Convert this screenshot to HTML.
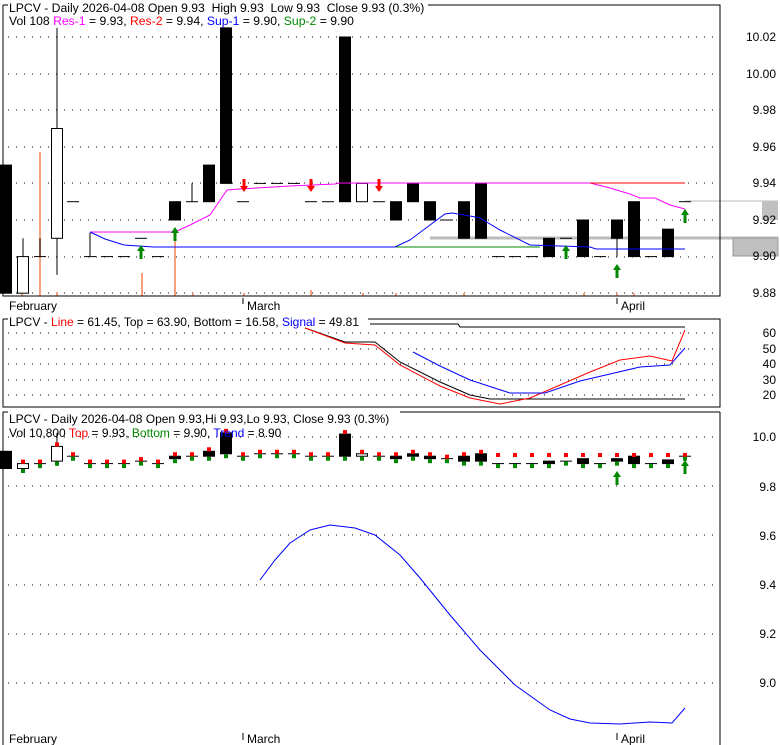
<!DOCTYPE html>
<html><head><meta charset="utf-8"><style>
body{margin:0;background:#fff}
svg{display:block;font-family:"Liberation Sans",Arial,sans-serif}
text{white-space:pre}
</style></head><body>
<svg id="s" width="780" height="745" xmlns="http://www.w3.org/2000/svg">
<rect width="780" height="745" fill="#fff"/>
<g id="g"></g>
<path d="M3,5V296H720V5H428" fill="none" stroke="#000"/>
<path d="M3,5H8" stroke="#000"/>
<text x="9" y="12" font-size="12.2" xml:space="preserve">LPCV - Daily 2026-04-08 Open 9.93  High 9.93  Low 9.93  Close 9.93 (0.3%)</text>
<text x="9" y="25" font-size="12.2">Vol 108 <tspan fill="#f0f">Res-1</tspan> = 9.93, <tspan fill="#f00">Res-2</tspan> = 9.94, <tspan fill="#00f">Sup-1</tspan> = 9.90, <tspan fill="#080">Sup-2</tspan> = 9.90</text>
<g font-size="12" text-anchor="end">
<text x="776" y="41">10.02</text><text x="776" y="78">10.00</text><text x="776" y="114">9.98</text><text x="776" y="151">9.96</text><text x="776" y="187">9.94</text><text x="776" y="224">9.92</text><text x="776" y="260">9.90</text><text x="776" y="297">9.88</text>
</g>
<text x="9" y="310" font-size="12">February</text>
<path d="M243,298V304M617,298V304" stroke="#000"/>
<text x="247" y="310" font-size="12">March</text>
<text x="621" y="310" font-size="12">April</text>
<path d="M3,319V407H720V319H368" fill="none" stroke="#000"/>
<path d="M3,319H8" stroke="#000"/>
<text x="9" y="326" font-size="12">LPCV - <tspan fill="#f00">Line</tspan> = 61.45, Top = 63.90, Bottom = 16.58, <tspan fill="#00f">Signal</tspan> = 49.81</text>
<g font-size="12" text-anchor="end">
<text x="776" y="337">60</text><text x="776" y="353">50</text><text x="776" y="368">40</text><text x="776" y="384">30</text><text x="776" y="399">20</text>
</g>
<polyline fill="none" stroke="#000" points="370,324 458,324 460,327 685,327"/>
<polyline fill="none" stroke="#000" points="305,328 345,342 375,342 400,362 440,382 470,395 490,399 685,399"/>
<polyline fill="none" stroke="#f00" points="305,328 345,343 375,345 400,365 440,386 470,398 500,404 530,398 560,385 590,372 620,360 650,356 672,361 685,330"/>
<polyline fill="none" stroke="#00f" points="413,352 440,366 470,380 510,393 545,393 580,381 610,374 640,367 670,365 685,348"/>
<path d="M3,412V745M3,412H8M720,412V745M400,412H720" fill="none" stroke="#000"/>
<text x="9" y="423" font-size="12">LPCV - Daily 2026-04-08 Open 9.93,Hi 9.93,Lo 9.93, Close 9.93 (0.3%)</text>
<text x="9" y="437" font-size="12">Vol 10,800 <tspan fill="#f00">Top</tspan> = 9.93, <tspan fill="#080">Bottom</tspan> = 9.90, <tspan fill="#00f">Trend</tspan> = 8.90</text>
<g font-size="12" text-anchor="end">
<text x="776" y="441">10.0</text><text x="776" y="491">9.8</text><text x="776" y="540">9.6</text><text x="776" y="589">9.4</text><text x="776" y="638">9.2</text><text x="776" y="687">9.0</text>
</g>
<polyline fill="none" stroke="#00f" points="260,580 275,560 290,543 310,530 330,525 355,528 375,535 400,555 420,578 450,615 480,650 515,685 550,710 570,719 590,723 620,724 650,722 672,723 685,708"/>
<text x="9" y="743" font-size="12">February</text>
<path d="M243,733V740M617,733V740" stroke="#000"/>
<text x="247" y="743" font-size="12">March</text>
<text x="621" y="743" font-size="12">April</text>
</svg>
<script>
var g=document.getElementById('g'),h='';
function P(p){return 37+(10.02-p)/0.02*36.6}
function Q(p){return 439+(10-p)*246}
function G(p){return 437+(10-p)*246}
[10.02,10,9.98,9.96,9.94,9.92,9.90,9.88].forEach(function(p){h+='<line x1="8" x2="720" y1="'+P(p).toFixed(0)+'" y2="'+P(p).toFixed(0)+'" stroke="#000" stroke-dasharray="1,7"/>'});
[60,50,40,30,20].forEach(function(v){var y=(333+(60-v)*1.55).toFixed(0);h+='<line x1="8" x2="720" y1="'+y+'" y2="'+y+'" stroke="#000" stroke-dasharray="1,7"/>'});
[10,9.8,9.6,9.4,9.2,9.0].forEach(function(p){var y=G(p).toFixed(0);h+='<line x1="8" x2="720" y1="'+y+'" y2="'+y+'" stroke="#000" stroke-dasharray="1,7"/>'});
[[40,152],[142,273],[175,230],[22,290],[57,292],[193,293],[244,293],[311,290],[363,293],[396,293],[464,293],[584,293],[617,293],[634,293]].forEach(function(v){h+='<line x1="'+v[0]+'" x2="'+v[0]+'" y1="'+v[1]+'" y2="296" stroke="#f9a07f" stroke-width="2"/>'});
h+='<line x1="685" x2="778" y1="201" y2="201" stroke="#bbb"/><rect x="762" y="201" width="16" height="19" fill="#c0c0c0"/>';
h+='<line x1="430" x2="778" y1="238" y2="238" stroke="#bbb" stroke-width="3"/><rect x="733" y="238" width="45" height="18" fill="#c0c0c0" stroke="#999"/>';
var C=[[0,'b',9.95,9.88,9.95,9.88],[17,'w',9.88,9.90,9.91,9.88],[34,'d',9.90,9.90,9.91,9.90],[51,'w',9.91,9.97,10.025,9.89],[67,'d',9.93,9.93],[84,'d',9.90,9.90,9.913,9.90],[101,'d',9.90,9.90],[118,'d',9.90,9.90],[135,'d',9.91,9.91],[152,'d',9.90,9.90],[169,'b',9.93,9.92],[186,'d',9.93,9.93,9.94,9.93],[203,'b',9.95,9.93],[220,'b',10.025,9.94],[237,'d',9.93,9.93],[254,'d',9.94,9.94],[271,'d',9.94,9.94],[288,'d',9.94,9.94],[305,'d',9.93,9.93],[322,'d',9.93,9.93],[339,'b',10.02,9.93],[356,'w',9.93,9.94],[373,'d',9.93,9.93],[390,'b',9.93,9.92],[407,'b',9.94,9.93],[424,'b',9.93,9.92],[441,'d',9.92,9.92],[458,'b',9.93,9.91],[475,'b',9.94,9.91],[492,'d',9.90,9.90],[509,'d',9.90,9.90],[526,'d',9.90,9.90],[543,'b',9.91,9.90],[560,'d',9.91,9.91],[577,'b',9.92,9.90],[594,'d',9.90,9.90],[611,'b',9.92,9.91,9.92,9.90],[628,'b',9.93,9.90],[645,'d',9.90,9.90],[662,'b',9.915,9.90],[679,'d',9.93,9.93]];
function cand(F){C.forEach(function(c){var x=c[0],w=12,a=F(c[2]),b=F(c[3]),t=Math.min(a,b),bt=Math.max(a,b),m=x+w/2;
if(c[4]!==undefined){h+='<line x1="'+m+'" x2="'+m+'" y1="'+F(c[4])+'" y2="'+F(c[5])+'" stroke="#000"/>'}
if(c[1]=='d'){h+='<line x1="'+x+'" x2="'+(x+w)+'" y1="'+a+'" y2="'+a+'" stroke="#000"/>'}
else{var hh=Math.max(bt-t,2);h+='<rect x="'+(x+0.5)+'" y="'+t+'" width="'+(w-1)+'" height="'+hh+'" fill="'+(c[1]=='b'?'#000':'#fff')+'" stroke="#000"/>'}});}
cand(P);cand(Q);
h+='<polyline fill="none" stroke="#f0f" points="90,232 175,232 190,225 210,215 227,190 240,189 290,186 335,184 340,183 590,183 610,188 630,194 640,198 655,198 670,205 685,209"/>';
h+='<line x1="590" x2="685" y1="183" y2="183" stroke="#f00"/>';
h+='<line x1="396" x2="540" y1="247" y2="247" stroke="#080"/>';
h+='<polyline fill="none" stroke="#00f" points="90,232 105,239 124,245 154,247 395,247 410,240 430,225 445,214 452,213 470,216 480,218 500,230 530,245 590,247 596,249 685,249"/>';
function up(x,y){return '<path d="M'+(x-4)+','+(y+6)+'L'+x+','+y+'L'+(x+4)+','+(y+6)+'H'+(x+1.5)+'V'+(y+14)+'H'+(x-1.5)+'V'+(y+6)+'Z" fill="#080"/>'}
function dn(x,y){return '<path d="M'+(x-4)+','+(y+7)+'L'+x+','+(y+13)+'L'+(x+4)+','+(y+7)+'H'+(x+1.5)+'V'+y+'H'+(x-1.5)+'V'+(y+7)+'Z" fill="#f00"/>'}
h+=up(141,245)+up(175,227)+up(566,245)+up(617,264)+up(685,209)+dn(244,179)+dn(311,179)+dn(379,179);
h+=up(617,471)+up(685,460);
C.forEach(function(c,i){var m=c[0]+6;if(i>0){var top=Math.max(c[2],c[3]);h+='<rect x="'+(m-2)+'" y="'+(i>28?453:Q(top)-4)+'" width="4" height="4" fill="#f00"/>';h+='<rect x="'+(m-2)+'" y="'+(Q(Math.min(c[2],c[3]))+0.5)+'" width="4" height="4" fill="#080"/>'}});
g.innerHTML=h;
</script>
</body></html>
